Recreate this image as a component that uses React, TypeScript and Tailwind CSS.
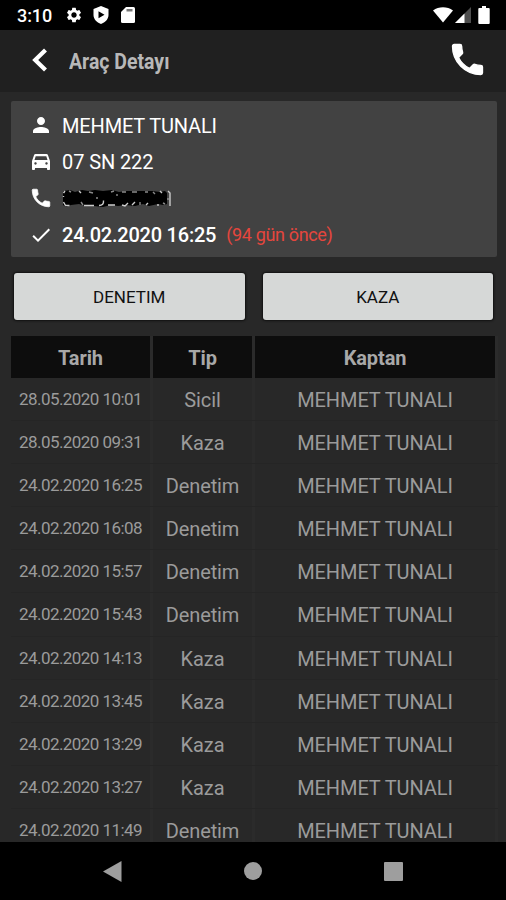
import React from "react";
import { MdCheck, MdPerson, MdSettings } from "react-icons/md";

interface Inspection {
  date: string;
  type: string;
  captain: string;
}

const captain = "MEHMET TUNALI";

const inspections: Inspection[] = [
  { date: "28.05.2020 10:01", type: "Sicil", captain },
  { date: "28.05.2020 09:31", type: "Kaza", captain },
  { date: "24.02.2020 16:25", type: "Denetim", captain },
  { date: "24.02.2020 16:08", type: "Denetim", captain },
  { date: "24.02.2020 15:57", type: "Denetim", captain },
  { date: "24.02.2020 15:43", type: "Denetim", captain },
  { date: "24.02.2020 14:13", type: "Kaza", captain },
  { date: "24.02.2020 13:45", type: "Kaza", captain },
  { date: "24.02.2020 13:29", type: "Kaza", captain },
  { date: "24.02.2020 13:27", type: "Kaza", captain },
  { date: "24.02.2020 11:49", type: "Denetim", captain },
];

// material glyphs, a bit heavier than the ones in react-icons
const PhoneIcon: React.FC<{ className: string }> = ({ className }) => (
  <svg className={className} viewBox="-0.3 -0.3 24.600 24.600" fill="currentColor" stroke="currentColor" strokeWidth="0.8">
    <path d="M6.620 10.790c1.440 2.830 3.760 5.140 6.590 6.590l2.200-2.200c.27-.27.67-.36 1.020-.24 1.120.37 2.330.57 3.570.57.55 0 1 .45 1 1V20c0 .55-.45 1-1 1-9.390 0-17-7.610-17-17 0-.55.45-1 1-1h3.500c.55 0 1 .45 1 1 0 1.250.2 2.450.57 3.570.11.35.03.74-.25 1.020l-2.200 2.200z" />
  </svg>
);

const CarIcon: React.FC<{ className: string }> = ({ className }) => (
  <svg className={className} viewBox="0 0 24 24" fill="currentColor">
    <path d="M18.920 6.010C18.720 5.420 18.160 5 17.500 5h-11c-.66 0-1.210.42-1.420 1.010L3 12v8c0 .55.45 1 1 1h1c.55 0 1-.45 1-1v-1h12v1c0 .55.45 1 1 1h1c.55 0 1-.45 1-1v-8l-2.080-5.990zM6.500 15.700c-.7 0-1.200-.5-1.200-1.200S5.800 13.300 6.500 13.300s1.200.5 1.200 1.200S7.200 15.700 6.500 15.700zm11 0c-.7 0-1.200-.5-1.200-1.200s.5-1.200 1.200-1.200 1.200.5 1.200 1.200-.5 1.200-1.200 1.200zM5.500 11l1.200-3.700h10.600L18.500 11H5.500z" />
  </svg>
);

const StatusBar: React.FC = () => (
  <div className="flex h-[30px] shrink-0 items-center justify-between bg-black pl-[17px] pr-4 text-white">
    <div className="flex items-center">
      <span className="w-[49px] whitespace-nowrap pt-px text-[18px] leading-[30px] font-medium tracking-[-0.1px]">
        3:10
      </span>
      <MdSettings className="-ml-[1px] mr-[10px] size-[18px]" />
      <svg className="mr-3 h-[18px] w-4" viewBox="0 0 16 18" fill="currentColor">
        <path fillRule="evenodd" d="M8 0 15.500 3v6c0 4-3.200 7.400-7.500 9C3.700 16.400.5 13 .5 9V3L8 0Zm-2.500 5.300v7L11.500 8.800 5.500 5.300Z" />
      </svg>
      <svg className="h-4 w-[14px]" viewBox="0 0 14 16" fill="currentColor">
        <path d="M5 0h7.500Q14 0 14 1.500v13q0 1.500-1.500 1.500h-11Q0 16 0 14.500V5L5 0Z" />
        <path d="M5.500 2h6v2.500h-6Z" fill="#777" />
      </svg>
    </div>
    <div className="flex items-center">
      <svg className="mr-[2px] h-4 w-5" viewBox="0 0 20 16" fill="currentColor">
        <path d="M0 3.500C5.800-.9 14.200-.9 20 3.500L10 15.500Z" />
      </svg>
      <svg className="mr-[7px] h-4 w-4" viewBox="0 0 16 16" fill="currentColor">
        <path d="M0 16 16 0v16Z" fillOpacity=".3" />
        <path d="M0 16 9.500 6.500V16Z" />
      </svg>
      <svg className="h-[18px] w-3" viewBox="0 0 12 18" fill="currentColor">
        <path d="M4 0h4v2h2.700q1 0 1 1v14q0 1-1 1H1.300q-1 0-1-1V3q0-1 1-1H4Z" />
      </svg>
    </div>
  </div>
);

const Header: React.FC = () => (
  <header className="flex h-[62px] shrink-0 items-center bg-[#202020] pl-8 pr-[18px]">
    <svg className="mb-[2px] h-6 w-4" viewBox="0 0 16 24" fill="none" stroke="#fff" strokeWidth="4.200">
      <path d="M13.500 2 3.200 12 13.500 22" />
    </svg>
    <h1 className="ml-[21px] flex-1 origin-left scale-x-[0.885] whitespace-nowrap text-[22px] font-bold text-[#b8b8b8]">
      Araç Detayı
    </h1>
    <PhoneIcon className="mb-[3px] size-[41px] text-white" />
  </header>
);

// phone number is scribbled over
const HiddenPhone: React.FC = () => (
  <svg className="h-[18px] w-[110px]" viewBox="0 0 110 18">
    <path
      fill="#000"
      d="M2 2 8 1l5 2 7-2 6 1 7-1 8 1 9-1 7 2 8-1 9 0 7 0 9 0 8 1 5-1 2 2v11l-4 1-5-1-9 2-6-2-8 2-9-1-8 1-7-1-8 2-9-1-9 0-6-2-8 1-5 2-3-2V2Z"
    />
    <g fill="none" stroke="#ccc" strokeWidth="1.400">
      <path d="M1.500 4 3 2M1.500 7v1M1.500 13l2 3.500 4 0M17 2l2 2M22 16.500h10M37 16.500q5 0 4.500-5M46 16h7M60 16l3 1 3-3M70 16l3-3M84 16l2-2M96 15v2M98 2l2 2M106 2l2 2v13" />
      <path stroke="#8a8a8a" d="M7 2l2 1M19 13l2 3M27 3l4 1M34 9h2M49 3l3-1M55 5v2M60 3l4 0M70 3h5M78 13v3M83 3l3 0M91 3l2 2M101 14l2 1M105 10h2" />
    </g>
  </svg>
);

const InfoCard: React.FC = () => (
  <section className="ml-[11px] mr-[9px] mt-[9px] flex h-[156px] shrink-0 flex-col rounded-xs bg-[#424242] pl-[18px] pt-[6px] text-[20px] text-white">
    <div className="flex h-[36.500px] items-center gap-[9px]">
      <MdPerson className="size-6" />
      <span className="whitespace-nowrap pt-px tracking-[-0.15px]">MEHMET TUNALI</span>
    </div>
    <div className="flex h-[36.500px] items-center gap-[9px]">
      <CarIcon className="mb-[2px] size-6" />
      <span className="whitespace-nowrap tracking-[-0.1px]">07 SN 222</span>
    </div>
    <div className="flex h-[36.500px] items-center gap-[9px]">
      <PhoneIcon className="size-6" />
      <HiddenPhone />
    </div>
    <div className="flex h-[36.500px] items-center gap-[9px]">
      <MdCheck className="size-6" />
      <span className="whitespace-nowrap font-medium tracking-[-0.22px]">24.02.2020 16:25</span>
      <span className="ml-px whitespace-nowrap text-[18px] tracking-[-0.350px] text-[#e5463d]">(94 gün önce)</span>
    </div>
  </section>
);

const ActionButton: React.FC<{ label: string }> = ({ label }) => (
  <button className="h-[47px] flex-1 rounded-[3px] bg-[#d6d8d7] pt-[2px] text-[17px] text-[#111] shadow-[0_0_2px_1px_#111]">
    {label}
  </button>
);

const App: React.FC = () => {
  return (
    <div className="flex h-[900px] w-[506px] flex-col overflow-hidden bg-[#282828] font-['Roboto',sans-serif]">
      <StatusBar />
      <Header />
      <main className="flex min-h-0 flex-1 flex-col overflow-hidden">
        <InfoCard />
        <div className="mt-4 flex shrink-0 gap-[18px] pl-[14px] pr-[13px]">
          <ActionButton label="DENETIM" />
          <ActionButton label="KAZA" />
        </div>
        <div className="ml-[11px] mt-4 w-[487px] shrink-0 text-[20px] tracking-[-0.1px] text-[#9b9b9b]">
          <div className="grid h-[42px] grid-cols-[142px_102px_243px] grid-rows-[42px] font-bold leading-[44px] text-[#a8a8a8]">
            <div className="border-r-3 border-[#2b2b2b] bg-[#0d0d0d] text-center">Tarih</div>
            <div className="border-r-3 border-[#2b2b2b] bg-[#0d0d0d] text-center">Tip</div>
            <div className="border-r-3 border-[#2b2b2b] bg-[#0d0d0d] text-center">Kaptan</div>
          </div>
          {inspections.map((row) => (
            <div
              key={row.date}
              className="grid h-[43.100px] grid-cols-[142px_102px_243px] grid-rows-[42.100px] whitespace-nowrap border-b border-[#252525] text-center leading-[44.500px]"
            >
              <div className="border-r-3 border-[#2b2b2b] text-[17px] leading-[43.600px] tracking-[-0.570px]">
                {row.date}
              </div>
              <div className="border-r-3 border-[#2b2b2b]">{row.type}</div>
              <div className="border-r-3 border-[#2b2b2b]">{row.captain}</div>
            </div>
          ))}
        </div>
      </main>
      <nav className="flex h-[58px] shrink-0 items-center justify-between bg-black pl-[103px] pr-[103px]">
        <svg className="h-[21px] w-[19px]" viewBox="0 0 19 21" fill="#9e9e9e">
          <path d="M18.500 0v21L0 10.500Z" />
        </svg>
        <div className="size-[18px] rounded-full bg-[#9e9e9e]" />
        <div className="size-[19px] rounded-[1px] bg-[#9e9e9e]" />
      </nav>
    </div>
  );
};

export default App;
